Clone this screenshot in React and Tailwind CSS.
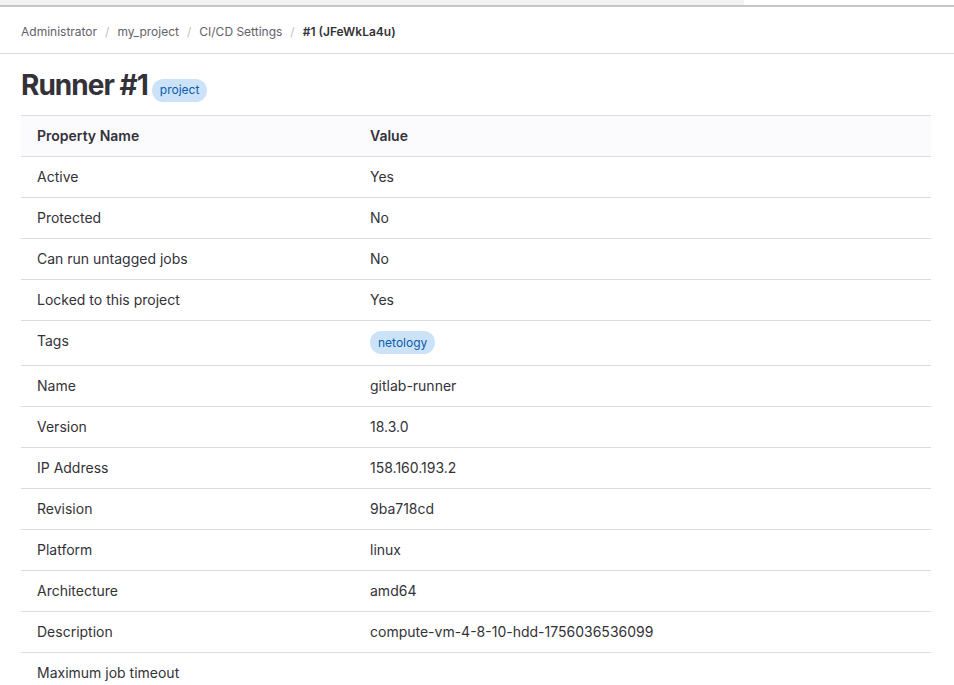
import React from 'react'

const rows = [
  ['Active', 'Yes'],
  ['Protected', 'No'],
  ['Can run untagged jobs', 'No'],
  ['Locked to this project', 'Yes'],
  ['Tags', { badge: 'netology' }],
  ['Name', 'gitlab-runner'],
  ['Version', '18.3.0'],
  ['IP Address', '158.160.193.2'],
  ['Revision', '9ba718cd'],
  ['Platform', 'linux'],
  ['Architecture', 'amd64'],
  ['Description', 'compute-vm-4-8-10-hdd-1756036536099'],
  ['Maximum job timeout', ''],
]

function Badge({ children }) {
  return (
    <span className="inline-flex items-center h-[23px] px-2 rounded-full bg-[#cbe2f9] text-[#0b5cad] text-[12px] leading-4">
      {children}
    </span>
  )
}

export default function App() {
  return (
    <div className="min-h-screen bg-white text-[#333238] font-['Inter','Liberation_Sans',sans-serif]">
      {/* browser-ish top strip */}
      <div className="flex h-[5px] border-b-2 border-[#c6c6c6] box-content">
        <div className="w-[744px] bg-[#f3f3f3]" />
        <div className="flex-1 bg-white" />
      </div>

      {/* breadcrumbs */}
      <nav className="h-[47px] border-b border-[#dcdcde] px-[21px] pt-[3px] flex items-center text-[12px]">
        <span className="text-[#626168]">Administrator</span>
        <span className="mx-[8px] text-[#bfbfc3]">/</span>
        <span className="text-[#626168]">my_project</span>
        <span className="mx-[8px] text-[#bfbfc3]">/</span>
        <span className="text-[#626168]">CI/CD Settings</span>
        <span className="mx-[8px] text-[#bfbfc3]">/</span>
        <span className="font-semibold text-[#333238]">#1 (JFeWkLa4u)</span>
      </nav>

      <main className="px-[21px] pr-[23px]">
        <div className="flex items-baseline gap-1 pt-[13px] pb-[12px]">
          <h1 className="text-[28px] leading-9 font-bold tracking-[-0.035em]">Runner #1</h1>
          <span className="relative -top-[1px]">
            <Badge>project</Badge>
          </span>
        </div>

        <table className="w-full border-collapse text-[14px] leading-5">
          <thead>
            <tr className="bg-[#fbfafd] border-y border-[#dcdcde]">
              <th className="w-[333px] text-left font-semibold px-4 py-[10px]">Property Name</th>
              <th className="text-left font-semibold px-4 py-[10px]">Value</th>
            </tr>
          </thead>
          <tbody>
            {rows.map(([k, v]) => (
              <tr key={k} className="border-b border-[#dcdcde]">
                <td className="px-4 py-[10px] align-top">{k}</td>
                <td className="px-4 py-[10px] align-top">
                  {typeof v === 'object' ? (
                    <span className="flex items-start h-[24px]">
                      <Badge>{v.badge}</Badge>
                    </span>
                  ) : (
                    v
                  )}
                </td>
              </tr>
            ))}
          </tbody>
        </table>
      </main>
    </div>
  )
}
